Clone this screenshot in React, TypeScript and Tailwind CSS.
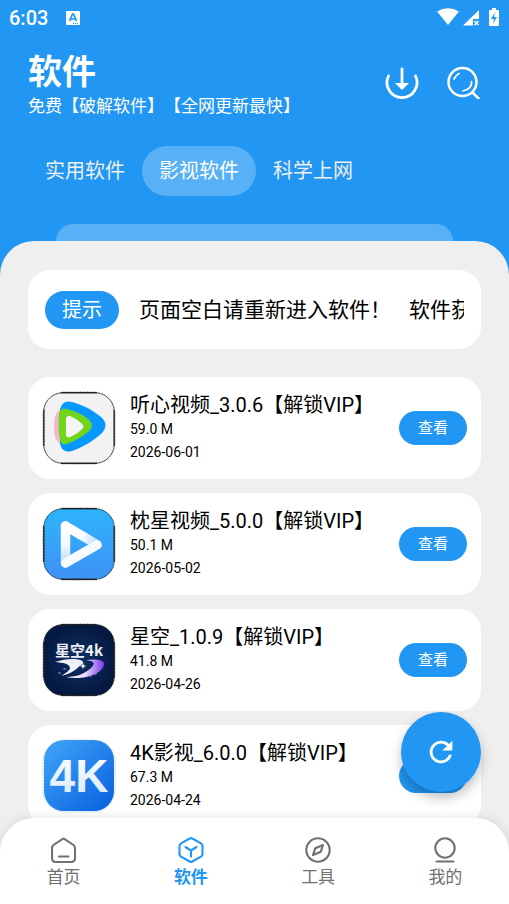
import type { ReactNode } from "react";

const tabs = ["实用软件", "影视软件", "科学上网"];

function IconFrame({ children, outlined = true }: { children: ReactNode; outlined?: boolean }) {
  return (
    <svg viewBox="0 0 74 74" className="size-[74px] shrink-0" aria-hidden="true">
      {children}
      <rect x="1" y="1" width="72" height="72" rx="22" fill="none" stroke={outlined ? "#333" : "#78aee8"} strokeWidth="1" strokeDasharray="2 1" strokeOpacity="0.5" />
      {outlined && <path d="M19 1.700H55M19 72.300H55M1.800 19V55M72.200 19V55" stroke="#222" strokeWidth="1.200" />}
    </svg>
  );
}

function TingxinIcon() {
  return (
    <IconFrame>
      <rect x="2" y="2" width="70" height="70" rx="18" fill="#f2f2f2" stroke="#555" strokeWidth="0.800" />
      <path d="M22 18c-8 0-10 8-10 18s2 17 10 17z" fill="#f8b5d3" />
      <path d="M18 19c1-7 6-10 12-8 11 3 21 8 29 15 6 5 6 11 0 17-8 7-18 13-29 17-6 2-11-1-12-8z" fill="#0698ff" />
      <path d="M17 23c0-4 4-6 8-5 8 2 15 5 21 10 5 4 5 9 0 13-6 5-13 9-21 12-4 1-7-1-7-5-2-8-2-17-1-25z" fill="#70d51b" />
      <path d="M24 28c0-2 2-4 4-3 5 2 9 5 12 8 2 2 2 3 0 5-3 3-7 6-12 8-2 1-4 0-4-2z" fill="#f5f5f5" />
    </IconFrame>
  );
}

function ZhenxingIcon() {
  return (
    <IconFrame>
      <defs>
        <linearGradient id="sky" x1="0" y1="0" x2="0" y2="1">
          <stop stopColor="#2db4fb" /><stop offset="1" stopColor="#3e91f5" />
        </linearGradient>
        <linearGradient id="left-fold" gradientUnits="userSpaceOnUse" x1="24" y1="18" x2="24" y2="55">
          <stop stopColor="#fff" /><stop offset=".55" stopColor="#f2f9ff" /><stop offset="1" stopColor="#b6dcff" />
        </linearGradient>
        <linearGradient id="top-fold" gradientUnits="userSpaceOnUse" x1="24" y1="19" x2="55" y2="37">
          <stop stopColor="#fff" /><stop offset=".5" stopColor="#fff" /><stop offset="1" stopColor="#b6dcff" />
        </linearGradient>
      </defs>
      <rect x="2" y="2" width="70" height="70" rx="18" fill="url(#sky)" stroke="#1c608f" strokeWidth="0.800" />
      <path d="M23.500 19V56" fill="none" stroke="url(#left-fold)" strokeWidth="9.500" strokeLinecap="round" />
      <path d="M23.500 19 55 37.500" fill="none" stroke="url(#top-fold)" strokeWidth="9.500" strokeLinecap="round" />
      <path d="M23.500 56 55 38" fill="none" stroke="#f7fbff" strokeWidth="9.500" strokeLinecap="round" />
    </IconFrame>
  );
}

function XingkongIcon() {
  return (
    <IconFrame>
      <defs>
        <radialGradient id="night"><stop stopColor="#0b3064" /><stop offset="1" stopColor="#051a42" /></radialGradient>
        <linearGradient id="comet"><stop stopColor="#fff" /><stop offset=".5" stopColor="#e5dcfa" /><stop offset="1" stopColor="#8039ee" /></linearGradient>
      </defs>
      <rect x="2" y="2" width="70" height="70" rx="18" fill="url(#night)" stroke="#101820" strokeWidth="0.800" />
      <text x="37" y="33" textAnchor="middle" fill="#eeeef5" fontSize="15" fontWeight="700" fontFamily="Noto Sans CJK SC, sans-serif">星空4k</text>
      <path d="M13 39c9-3 19-4 25-2 4 1 4 3 1 5-4 3-7 8-20 11 5-3 9-6 9-8-1-5-7-5-15-6z" fill="#f0f1f8" />
      <path d="M24 54c12 0 20-4 26-10 4-4 1-6-6-7 8-1 18-1 18 4 0 9-20 17-38 13z" fill="url(#comet)" />
      <path d="M41 39.500l.8 2.700 2.700.8-2.700.8-.8 2.700-.8-2.700-2.700-.8 2.700-.8z" fill="#fff" />
      <path d="M48 53h1M53 51h1M17 50h1M22 46h1" stroke="#a679f2" strokeWidth="1.500" strokeLinecap="round" />
    </IconFrame>
  );
}

function FourKIcon() {
  return (
    <IconFrame outlined={false}>
      <defs>
        <linearGradient id="blue" x1="0" y1="0" x2="1" y2="1"><stop stopColor="#40a5f7" /><stop offset="1" stopColor="#0860df" /></linearGradient>
        <linearGradient id="silver" x1="0" y1="0" x2="0" y2="1"><stop stopColor="#fff" /><stop offset="1" stopColor="#d6e7fb" /></linearGradient>
      </defs>
      <rect x="2" y="1" width="70" height="71" rx="20" fill="url(#blue)" />
      <text x="37" y="53" textAnchor="middle" fill="url(#silver)" fontSize="46" fontWeight="700" fontFamily="Liberation Sans, Arial, sans-serif">4K</text>
    </IconFrame>
  );
}

const apps = [
  { name: "听心视频_3.0.6【解锁VIP】", size: "59.0 M", date: "2026-06-01", icon: <TingxinIcon /> },
  { name: "枕星视频_5.0.0【解锁VIP】", size: "50.1 M", date: "2026-05-02", icon: <ZhenxingIcon /> },
  { name: "星空_1.0.9【解锁VIP】", size: "41.8 M", date: "2026-04-26", icon: <XingkongIcon /> },
  { name: "4K影视_6.0.0【解锁VIP】", size: "67.3 M", date: "2026-04-24", icon: <FourKIcon /> },
];

const navItems = [
  { label: "首页", drawing: <><path d="M11.700 1.800 2.500 8Q1 9 1 11v10q0 4 4 4h15q4 0 4-4V11q0-2-1.500-3L13.300 1.800q-.8-.6-1.600 0Z" /><path d="M8 19.500h9.500" /></> },
  { label: "软件", drawing: <><path d="M11.700 1.500 3 6.300Q1.500 7.200 1.500 9v8q0 1.800 1.500 2.700l8.700 4.800q1.300.8 2.600 0l8.700-4.800Q24.500 18.800 24.500 17V9q0-1.800-1.500-2.700l-8.700-4.800q-1.300-.8-2.600 0Z" /><path d="m7.500 10 5.500 3.500 5.500-3.500M13 13.500v6" /></> },
  { label: "工具", drawing: <><circle cx="13" cy="13" r="11.700" /><path d="m18 8-2.300 6.800L8 18l2.300-6.800L18 8Z" /></> },
  { label: "我的", drawing: <><circle cx="13" cy="11" r="9.700" /><path d="M4.500 24.500h17" /></> },
];

function StatusBar() {
  return (
    <div className="flex h-9 items-center pl-[9px] pr-2">
      <time className="text-[20px] font-medium leading-6">6:03</time>
      <svg viewBox="0 0 14 14" className="ml-[18px] size-[14px]" aria-hidden="true">
        <rect width="14" height="14" rx="1" fill="white" />
        <path d="m3.500 10 3-7h1l3 7M5 8h4" fill="none" stroke="#2196f3" strokeWidth="1.700" />
        <path d="M7 12.500h6" stroke="#2196f3" strokeDasharray="1 1" />
      </svg>
      <svg viewBox="0 0 64 20" className="ml-auto h-5 w-16" aria-hidden="true">
        <path d="M0 3.500Q11-3 22 3.500L11 17Z" fill="white" />
        <path d="M42 2v9h-6v6.500H26Z" fill="white" />
        <path d="m37.500 13 4 4m0-4-4 4" stroke="white" strokeWidth="1.500" />
        <path d="M55 0h4v2h2q1 0 1 1v14q0 1-1 1h-8q-1 0-1-1V3q0-1 1-1h2Z" fill="white" />
        <path d="m58 4-4 7h3l-1 5 4-7h-3z" fill="#2196f3" />
      </svg>
    </div>
  );
}

export default function App() {
  return (
    <div className="relative flex h-screen flex-col overflow-hidden bg-[#2196f3] font-[Roboto,'Noto_Sans_CJK_SC',sans-serif] text-black">
      <header className="shrink-0 text-white">
        <StatusBar />
        <div className="flex items-start justify-between px-7 pt-4">
          <div>
            <h1 className="text-[34px] font-bold leading-10">软件</h1>
            <p className="text-[17px] leading-7 [text-spacing-trim:space-all]">免费【破解软件】【全网更新最快】</p>
          </div>
          <div className="flex gap-7 pt-[13px]">
            <button type="button" aria-label="下载" className="size-[34px]">
              <svg viewBox="0 0 34 34" fill="none" stroke="white" strokeWidth="2.800" strokeLinecap="round">
                <path d="M3.500 11A15 15 0 1 0 30.500 11M17 4v15" />
                <path d="M10 18h14l-7 7Z" fill="white" stroke="none" />
              </svg>
            </button>
            <button type="button" aria-label="搜索" className="size-[34px]">
              <svg viewBox="0 0 34 34" fill="none" stroke="white" strokeWidth="2.500" strokeLinecap="round">
                <circle cx="15.500" cy="17" r="14" /><path d="m25.500 27.500 6 6" />
                <path d="M7 14q2-4 5-5.500M24.500 16.500q1 7-8.500 9.500" strokeWidth="1.700" />
              </svg>
            </button>
          </div>
        </div>
        <nav aria-label="软件分类" className="flex px-7 pt-[26px]">
          {tabs.map((tab) => (
            <button key={tab} type="button" className={tab === "影视软件" ? "h-[50px] rounded-full bg-white/25 px-[17px] text-[20px]" : "h-[50px] px-[17px] text-[20px] text-[#efefef]"}>{tab}</button>
          ))}
        </nav>
        <div className="mx-14 mt-7 h-[17px] rounded-t-[17px] bg-white/25" />
      </header>

      <main className="min-h-0 flex-1 overflow-hidden rounded-t-[34px] bg-[#efefef] px-7 pt-[29px]">
        <section className="flex h-[79px] items-center gap-5 rounded-[22px] bg-white px-[17px]">
          <span className="flex h-[38px] shrink-0 items-center rounded-full bg-[#2196f3] px-[17px] text-[20px] text-white">提示</span>
          <p className="flex min-w-0 gap-[18px] overflow-hidden whitespace-nowrap text-[21px] leading-8">
            <span>页面空白请重新进入软件！</span>
            <span>软件获取</span>
          </p>
        </section>
        <ul className="mt-7 flex flex-col gap-[14px]">
          {apps.map((app) => (
            <li key={app.name} className="flex h-[102px] items-center rounded-[22px] bg-white px-[14px]">
              {app.icon}
              <div className="ml-[14px] min-w-0 flex-1">
                <h2 className="whitespace-nowrap text-[20px] leading-6">{app.name}</h2>
                <p className="text-[14px] leading-6">{app.size}</p>
                <p className="text-[14px] leading-[22px]">{app.date}</p>
              </div>
              <button type="button" className="h-[34px] w-[68px] shrink-0 rounded-full bg-[#2196f3] text-[15px] text-white">查看</button>
            </li>
          ))}
        </ul>
      </main>

      <button type="button" aria-label="刷新" className="absolute bottom-28 right-7 flex size-20 items-center justify-center rounded-full bg-[#2196f3] text-white shadow-[0_6px_12px_rgba(0,0,0,0.25)]">
        <svg viewBox="0 0 24 24" className="size-[34px]" fill="currentColor" aria-hidden="true">
          <path d="M17.650 6.350A7.950 7.950 0 0 0 12 4a8 8 0 1 0 7.730 10h-2.080A6 6 0 1 1 12 6c1.660 0 3.140.69 4.220 1.780L13 11h7V4z" />
        </svg>
      </button>

      <nav aria-label="主导航" className="absolute inset-x-0 bottom-0 flex h-[86px] rounded-t-[34px] bg-white shadow-[0_0_12px_rgba(0,0,0,0.12)]">
        {navItems.map((item) => (
          <button key={item.label} type="button" className={item.label === "软件" ? "flex flex-1 flex-col items-center pt-[19px] font-bold text-[#2196f3]" : "flex flex-1 flex-col items-center pt-[19px] text-[#707070]"}>
            <svg viewBox="0 0 26 26" className="size-[26px]" fill="none" stroke="currentColor" strokeWidth="2.100" strokeLinecap="round" strokeLinejoin="round" aria-hidden="true">{item.drawing}</svg>
            <span className="text-[17px] leading-7">{item.label}</span>
          </button>
        ))}
      </nav>
    </div>
  );
}
